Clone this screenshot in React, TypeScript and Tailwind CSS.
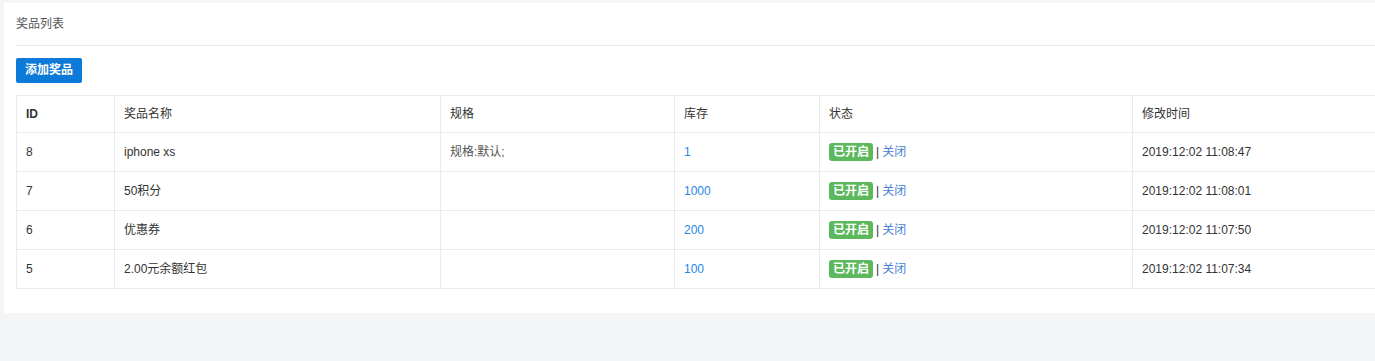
import React from 'react'

interface Prize {
  id: number
  name: string
  spec: string
  stock: number
  time: string
}

const prizes: Prize[] = [
  { id: 8, name: 'iphone xs', spec: '规格:默认;', stock: 1, time: '2019:12:02 11:08:47' },
  { id: 7, name: '50积分', spec: '', stock: 1000, time: '2019:12:02 11:08:01' },
  { id: 6, name: '优惠券', spec: '', stock: 200, time: '2019:12:02 11:07:50' },
  { id: 5, name: '2.00元余额红包', spec: '', stock: 100, time: '2019:12:02 11:07:34' },
]

const font = { fontFamily: '"Liberation Sans", "Noto Sans CJK SC", sans-serif' }

export default function App() {
  return (
    <div className="w-[1375px] h-[361px] overflow-hidden bg-[#f4f5f7] pt-[3px] pl-[4px]" style={font}>
      <div className="w-[1420px] h-[310px] bg-white px-3">
        <div className="h-[43px] flex items-center border-b border-[#e9e9e9] text-[12px] text-[#555]">
          奖品列表
        </div>

        <div className="pt-[11px]">
          <button className="h-[25px] px-[9px] bg-[#0b7ad8] text-white text-[12px] font-bold rounded-[2px] leading-none">
            添加奖品
          </button>
        </div>

        <table className="mt-[12px] table-fixed border-collapse text-[12px] text-[#333] w-[1400px]">
          <colgroup>
            <col className="w-[98px]" />
            <col className="w-[326px]" />
            <col className="w-[234px]" />
            <col className="w-[145px]" />
            <col className="w-[313px]" />
            <col />
          </colgroup>
          <thead>
            <tr className="h-[37px]">
              {['ID', '奖品名称', '规格', '库存', '状态', '修改时间'].map((h, i) => (
                <th
                  key={h}
                  className={`border border-[#ebebeb] text-left pl-[9px] ${i === 0 ? 'font-bold' : 'font-normal'}`}
                >
                  {h}
                </th>
              ))}
            </tr>
          </thead>
          <tbody>
            {prizes.map(p => (
              <tr key={p.id} className="h-[39px]">
                <td className="border border-[#ebebeb] pl-[9px]">{p.id}</td>
                <td className="border border-[#ebebeb] pl-[9px]">{p.name}</td>
                <td className="border border-[#ebebeb] pl-[9px] text-[#555]">{p.spec}</td>
                <td className="border border-[#ebebeb] pl-[9px] text-[#1e88e5]">{p.stock}</td>
                <td className="border border-[#ebebeb] pl-[9px]">
                  <span className="inline-block bg-[#5cb85c] text-white font-bold px-[4px] h-[18px] leading-[18px] rounded-[3px]">
                    已开启
                  </span>
                  <span className="text-[#333] mx-[3px]">|</span>
                  <span className="text-[#4a7fd0]">关闭</span>
                </td>
                <td className="border border-[#ebebeb] pl-[9px]">{p.time}</td>
              </tr>
            ))}
          </tbody>
        </table>
      </div>
    </div>
  )
}
